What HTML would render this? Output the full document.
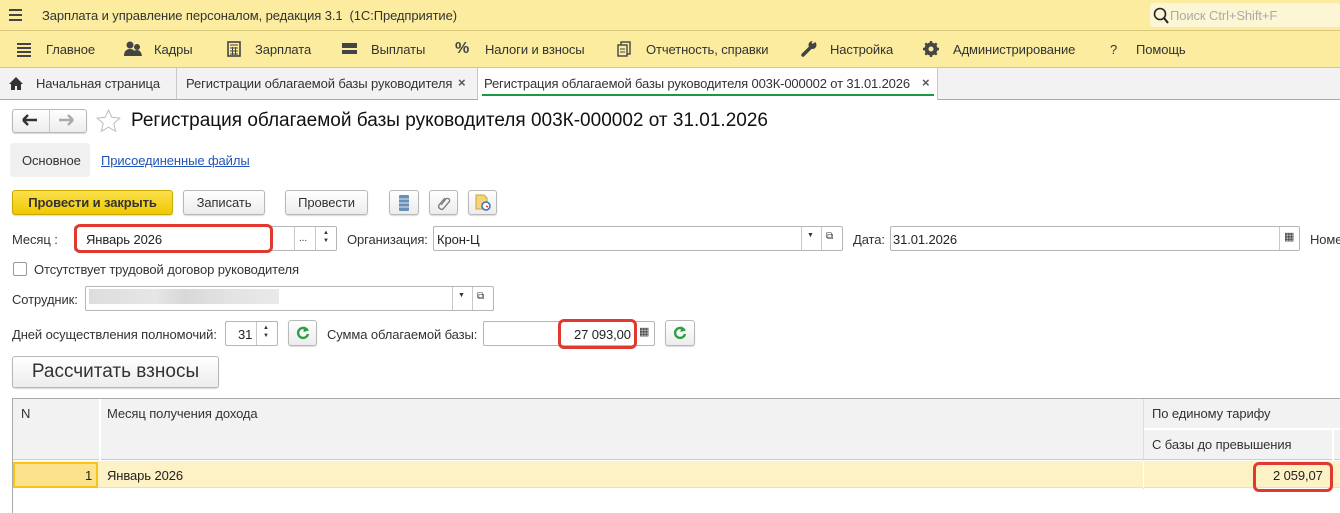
<!DOCTYPE html>
<html><head><meta charset="utf-8"><style>
*{box-sizing:border-box;margin:0;padding:0}
body{width:1340px;height:513px;overflow:hidden;background:#fff;font-family:"Liberation Sans",Arial,sans-serif;font-size:13px;letter-spacing:-0.1px;color:#333;position:relative}
.a{position:absolute;white-space:nowrap}
.inp{position:absolute;border:1px solid #b5b5b5;border-radius:2px;background:#fff;height:25px}
.btn{position:absolute;border:1px solid #b8b8b8;border-radius:3px;background:linear-gradient(#fff,#ececec);height:25px;text-align:center;line-height:23px;box-shadow:0 1px 1px rgba(0,0,0,.15)}
.red{position:absolute;border:3px solid #e03a30;border-radius:6px}
.sep{position:absolute;width:1px;background:#c8c8c8}
</style></head><body>
<div class="a" style="left:0;top:0;width:1340px;height:31px;background:#fbec9f;border-bottom:1px solid #d9c87a"></div>
<div class="a" style="left:9px;top:9px;width:13px;height:2px;background:#444;box-shadow:0 5px 0 #444,0 10px 0 #444"></div>
<div class="a" style="left:42px;top:8px;color:#333">Зарплата и управление персоналом, редакция 3.1&nbsp; (1С:Предприятие)</div>
<div class="a" style="left:1150px;top:3px;width:190px;height:24px;background:#fdf6d4;border-radius:3px"></div>
<svg class="a" style="left:1153px;top:7px" width="16" height="17"><circle cx="7" cy="7" r="5.5" fill="none" stroke="#222" stroke-width="1.6"/><path d="M11 11l4 5" stroke="#222" stroke-width="2"/></svg>
<div class="a" style="left:1170px;top:8px;color:#aaa">Поиск Ctrl+Shift+F</div>
<div class="a" style="left:0;top:31px;width:1340px;height:37px;background:#fbec9f;border-bottom:1px solid #d9c87a"></div>
<div class="a" style="left:17px;top:43px;width:14px;height:2px;background:#444;box-shadow:0 4px 0 #444,0 8px 0 #444,0 12px 0 #444"></div>
<div class="a" style="left:46px;top:42px">Главное</div>
<svg class="a" style="left:123px;top:41px" width="20" height="16"><circle cx="7" cy="4" r="3.5" fill="#444"/><circle cx="14" cy="6" r="3" fill="#444"/><path d="M1 15q0-7 6-7t6 7zM9 15q1-6 5-6t5 6z" fill="#444"/></svg>
<div class="a" style="left:154px;top:42px">Кадры</div>
<svg class="a" style="left:227px;top:41px" width="14" height="16"><rect x="1" y="1" width="12" height="14" fill="none" stroke="#444" stroke-width="1.6"/><path d="M3 4h8M3 7h8M3 10h8M3 13h8M5.5 6v8M8.5 6v8" stroke="#444"/></svg>
<div class="a" style="left:255px;top:42px">Зарплата</div>
<div class="a" style="left:342px;top:43px;width:15px;height:11px;background:#444;border-top:3px solid #444"><div style="margin-top:2px;height:2px;background:#fbec9f"></div></div>
<div class="a" style="left:371px;top:42px">Выплаты</div>
<div class="a" style="left:455px;top:40px;font-size:16px;font-weight:bold;color:#444">%</div>
<div class="a" style="left:485px;top:42px">Налоги и взносы</div>
<svg class="a" style="left:617px;top:41px" width="14" height="16"><rect x="4" y="1" width="9" height="12" fill="none" stroke="#444" stroke-width="1.4"/><rect x="1" y="4" width="9" height="11" fill="#fbec9f" stroke="#444" stroke-width="1.4"/><path d="M3 8h5M3 11h5" stroke="#444"/></svg>
<div class="a" style="left:646px;top:42px">Отчетность, справки</div>
<svg class="a" style="left:801px;top:40px" width="16" height="17"><path d="M2 15l8-8" stroke="#444" stroke-width="3.5" stroke-linecap="round"/><circle cx="11.5" cy="5" r="4" fill="#444"/><path d="M11 3l3-2" stroke="#fbec9f" stroke-width="2"/></svg>
<div class="a" style="left:830px;top:42px">Настройка</div>
<svg class="a" style="left:923px;top:41px" width="16" height="16"><circle cx="8" cy="8" r="5" fill="none" stroke="#444" stroke-width="3"/><path d="M8 0v16M0 8h16M2.3 2.3l11.4 11.4M13.7 2.3L2.3 13.7" stroke="#444" stroke-width="2.4"/><circle cx="8" cy="8" r="2.5" fill="#fbec9f"/></svg>
<div class="a" style="left:953px;top:42px">Администрирование</div>
<div class="a" style="left:1110px;top:42px;color:#333">?</div>
<div class="a" style="left:1136px;top:42px">Помощь</div>
<div class="a" style="left:0;top:68px;width:1340px;height:32px;background:#f2f2f2;border-bottom:1px solid #a9a9a9"></div>
<svg class="a" style="left:9px;top:77px" width="14" height="13"><path d="M7 0L0 7h2v6h4V9h2v4h4V7h2z" fill="#333"/></svg>
<div class="a" style="left:36px;top:76px">Начальная страница</div>
<div class="sep" style="left:176px;top:68px;height:31px;background:#c8c8c8"></div>
<div class="a" style="left:186px;top:76px">Регистрации облагаемой базы руководителя</div>
<div class="a" style="left:458px;top:75px;color:#555;font-weight:bold">×</div>
<div class="sep" style="left:477px;top:68px;height:31px"></div>
<div class="a" style="left:478px;top:68px;width:460px;height:32px;background:#fff;border-right:1px solid #c8c8c8"></div>
<div class="a" style="left:484px;top:76px;letter-spacing:-0.15px">Регистрация облагаемой базы руководителя 003К-000002 от 31.01.2026</div>
<div class="a" style="left:922px;top:75px;color:#555;font-weight:bold">×</div>
<div class="a" style="left:482px;top:94px;width:452px;height:2px;background:#1a9a44"></div>
<div class="btn" style="left:12px;top:109px;width:75px;height:24px"></div>
<div class="sep" style="left:49px;top:110px;height:22px"></div>
<svg class="a" style="left:22px;top:114px" width="16" height="12"><path d="M1 6h14M1 6l5-5M1 6l5 5" stroke="#333" stroke-width="2.4" fill="none"/></svg>
<svg class="a" style="left:58px;top:114px" width="16" height="12"><path d="M15 6H1M15 6l-5-5M15 6l-5 5" stroke="#aaa" stroke-width="2.4" fill="none"/></svg>
<svg class="a" style="left:96px;top:109px" width="25" height="24"><path d="M12.5 1l3.3 7.3 8 .8-6 5.4 1.8 7.8-7.1-4.1-7.1 4.1 1.8-7.8-6-5.4 8-.8z" fill="none" stroke="#bbb"/></svg>
<div class="a" style="left:131px;top:110px;font-size:19px;color:#111;letter-spacing:0">Регистрация облагаемой базы руководителя 003К-000002 от 31.01.2026</div>
<div class="a" style="left:10px;top:143px;width:80px;height:34px;background:#f0f0f0;border-radius:3px"></div>
<div class="a" style="left:22px;top:153px">Основное</div>
<div class="a" style="left:101px;top:153px;color:#2255bb;text-decoration:underline">Присоединенные файлы</div>
<div class="btn" style="left:12px;top:190px;width:161px;background:linear-gradient(#fbe04a,#f0c800);border-color:#c9a800;font-weight:bold;color:#333">Провести и закрыть</div>
<div class="btn" style="left:183px;top:190px;width:82px">Записать</div>
<div class="btn" style="left:285px;top:190px;width:83px">Провести</div>
<div class="btn" style="left:389px;top:190px;width:30px"><svg width="12" height="16" style="margin-top:4px"><rect x="1" y="0" width="10" height="16" rx="1" fill="#6a8fb5"/><path d="M1 4h10M1 8h10M1 12h10" stroke="#dfe8f0"/></svg></div>
<div class="btn" style="left:429px;top:190px;width:29px"><svg width="14" height="16" style="margin-top:4px"><path d="M4 10l5-6a2 2 0 013 3L6 14a3 3 0 01-4-4l6-7" fill="none" stroke="#777" stroke-width="1.3"/></svg></div>
<div class="btn" style="left:468px;top:190px;width:29px"><svg width="16" height="17" style="margin-top:3px"><path d="M1 1h8l3 3v11H1z" fill="#f3d57a" stroke="#c9a43e"/><circle cx="11" cy="12" r="4" fill="#fff" stroke="#3a6fbf" stroke-width="1.5"/><path d="M11 12l2 1" stroke="#d33" stroke-width="1.4"/></svg></div>
<div class="a" style="left:12px;top:232px">Месяц :</div>
<div class="inp" style="left:74px;top:226px;width:263px"></div>
<div class="sep" style="left:294px;top:227px;height:23px"></div>
<div class="sep" style="left:315px;top:227px;height:23px"></div>
<div class="a" style="left:299px;top:233px;font-size:10px">...</div>
<div class="a" style="left:323px;top:229px;font-size:6px;line-height:8px">▲<br>▼</div>
<div class="a" style="left:86px;top:232px;color:#222">Январь 2026</div>
<div class="red" style="left:74px;top:224px;width:199px;height:29px"></div>
<div class="a" style="left:347px;top:232px">Организация:</div>
<div class="inp" style="left:433px;top:226px;width:410px"></div>
<div class="sep" style="left:801px;top:227px;height:23px"></div>
<div class="sep" style="left:821px;top:227px;height:23px"></div>
<div class="a" style="left:807px;top:232px;font-size:7px">▼</div>
<div class="a" style="left:826px;top:231px;font-size:10px">⧉</div>
<div class="a" style="left:437px;top:232px;color:#222">Крон-Ц</div>
<div class="a" style="left:853px;top:232px">Дата:</div>
<div class="inp" style="left:890px;top:226px;width:410px"></div>
<div class="sep" style="left:1279px;top:227px;height:23px"></div>
<div class="a" style="left:1284px;top:230px;font-size:11px">▦</div>
<div class="a" style="left:893px;top:232px;color:#222">31.01.2026</div>
<div class="a" style="left:1310px;top:232px">Номе</div>
<div class="a" style="left:13px;top:262px;width:14px;height:14px;border:1px solid #999;border-radius:2px;background:#fff"></div>
<div class="a" style="left:34px;top:262px">Отсутствует трудовой договор руководителя</div>
<div class="a" style="left:12px;top:292px">Сотрудник:</div>
<div class="inp" style="left:85px;top:286px;width:409px"></div>
<div class="a" style="left:89px;top:289px;width:190px;height:15px;background:linear-gradient(90deg,#ddd 0,#e6e6e6 35%,#d8d8d8 50%,#e3e3e3 75%,#e9e9e9)"></div>
<div class="sep" style="left:452px;top:287px;height:23px"></div>
<div class="sep" style="left:472px;top:287px;height:23px"></div>
<div class="a" style="left:458px;top:292px;font-size:7px">▼</div>
<div class="a" style="left:477px;top:291px;font-size:10px">⧉</div>
<div class="a" style="left:12px;top:327px">Дней осуществления полномочий:</div>
<div class="inp" style="left:225px;top:321px;width:53px"></div>
<div class="sep" style="left:256px;top:322px;height:23px"></div>
<div class="a" style="left:263px;top:324px;font-size:6px;line-height:8px">▲<br>▼</div>
<div class="a" style="left:238px;top:327px;color:#222">31</div>
<div class="btn" style="left:288px;top:320px;width:29px;height:26px"><svg width="14" height="14" style="margin-top:5px"><path d="M11.5 4.5A5 5 0 1 0 12 8" fill="none" stroke="#2ea043" stroke-width="2.4"/><path d="M8 0.5l5 4-5.5 1.5z" fill="#2ea043"/></svg></div>
<div class="a" style="left:327px;top:327px">Сумма облагаемой базы:</div>
<div class="inp" style="left:483px;top:321px;width:172px"></div>
<div class="sep" style="left:635px;top:322px;height:23px"></div>
<div class="a" style="left:639px;top:325px;font-size:11px">▦</div>
<div class="a" style="left:574px;top:327px;color:#222">27 093,00</div>
<div class="red" style="left:558px;top:319px;width:79px;height:30px"></div>
<div class="btn" style="left:665px;top:320px;width:30px;height:26px"><svg width="14" height="14" style="margin-top:5px"><path d="M11.5 4.5A5 5 0 1 0 12 8" fill="none" stroke="#2ea043" stroke-width="2.4"/><path d="M8 0.5l5 4-5.5 1.5z" fill="#2ea043"/></svg></div>
<div class="btn" style="left:12px;top:356px;width:207px;height:32px;font-size:19px;line-height:30px;color:#333;letter-spacing:0">Рассчитать взносы</div>
<div class="a" style="left:12px;top:398px;width:1328px;height:115px;border-left:1px solid #aaa;border-top:1px solid #aaa"></div>
<div class="a" style="left:13px;top:399px;width:1327px;height:61px;background:#f2f2f2;border-bottom:1px solid #ccc"></div>
<div class="a" style="left:99px;top:399px;width:2px;height:61px;background:#fff"></div>
<div class="a" style="left:1143px;top:399px;width:1px;height:90px;background:#fff;border-left:1px solid #ddd"></div>
<div class="a" style="left:1144px;top:428px;width:196px;height:2px;background:#fff"></div>
<div class="a" style="left:1332px;top:430px;width:2px;height:30px;background:#fff"></div>
<div class="a" style="left:21px;top:406px">N</div>
<div class="a" style="left:107px;top:406px">Месяц получения дохода</div>
<div class="a" style="left:1152px;top:406px">По единому тарифу</div>
<div class="a" style="left:1152px;top:437px">С базы до превышения</div>
<div class="a" style="left:13px;top:461px;width:1327px;height:27px;background:#fdf2c6;border-bottom:1px solid #e6e0c8"></div>
<div class="a" style="left:1143px;top:461px;width:1px;height:27px;background:#fff"></div>
<div class="a" style="left:13px;top:462px;width:85px;height:26px;background:#fce28c;border:2px solid #f5c518"></div>
<div class="a" style="left:85px;top:468px;color:#222">1</div>
<div class="a" style="left:107px;top:468px;color:#222">Январь 2026</div>
<div class="a" style="left:1273px;top:468px;color:#222">2 059,07</div>
<div class="red" style="left:1253px;top:462px;width:80px;height:30px"></div>
</body></html>
